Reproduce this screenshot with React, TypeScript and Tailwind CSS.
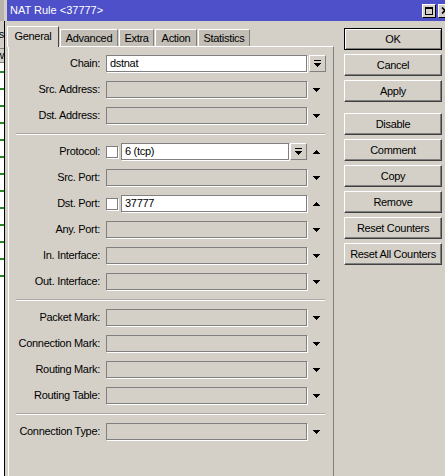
import React from "react";

type Kind = "chain" | "down" | "proto" | "port";
type Field = { label: string; kind: Kind; value?: string };

const sections: Field[][] = [
  [
    { label: "Chain:", kind: "chain", value: "dstnat" },
    { label: "Src. Address:", kind: "down" },
    { label: "Dst. Address:", kind: "down" },
  ],
  [
    { label: "Protocol:", kind: "proto", value: "6 (tcp)" },
    { label: "Src. Port:", kind: "down" },
    { label: "Dst. Port:", kind: "port", value: "37777" },
    { label: "Any. Port:", kind: "down" },
    { label: "In. Interface:", kind: "down" },
    { label: "Out. Interface:", kind: "down" },
  ],
  [
    { label: "Packet Mark:", kind: "down" },
    { label: "Connection Mark:", kind: "down" },
    { label: "Routing Mark:", kind: "down" },
    { label: "Routing Table:", kind: "down" },
  ],
  [{ label: "Connection Type:", kind: "down" }],
];

const tabs = [
  { name: "Advanced", w: "w-[58px]" },
  { name: "Extra", w: "w-[35px]" },
  { name: "Action", w: "w-[42px]" },
  { name: "Statistics", w: "w-[52px]" },
];

function Tri({ up }: { up?: boolean }) {
  return (
    <svg width="7" height="4" viewBox="0 0 7 4" shapeRendering="crispEdges" className="ml-[6px] shrink-0">
      <g fill="#000" transform={up ? "matrix(1 0 0 -1 0 4)" : undefined}>
        <rect x="0" y="0" width="7" height="1" />
        <rect x="1" y="1" width="5" height="1" />
        <rect x="2" y="2" width="3" height="1" />
        <rect x="3" y="3" width="1" height="1" />
      </g>
    </svg>
  );
}

function DropBtn({ className = "" }: { className?: string }) {
  return (
    <div
      className={`flex h-[17px] w-[17px] shrink-0 items-center justify-center border border-t-white border-l-white border-b-[#808080] border-r-[#808080] bg-[#d4d0c8] ${className}`}
    >
      <svg width="7" height="7" viewBox="0 0 7 7" shapeRendering="crispEdges">
        <g fill="#000">
          <rect x="0" y="0" width="7" height="1" />
          <rect x="0" y="3" width="7" height="1" />
          <rect x="1" y="4" width="5" height="1" />
          <rect x="2" y="5" width="3" height="1" />
          <rect x="3" y="6" width="1" height="1" />
        </g>
      </svg>
    </div>
  );
}

function Box({ value, w }: { value?: string; w: string }) {
  return (
    <div
      className={`h-[17px] ${w} shrink-0 border border-[#808080] shadow-[1px_1px_0_#ffffff] pl-[3px] leading-[15px] ${
        value !== undefined ? "bg-white" : "bg-[#d4d0c8]"
      }`}
    >
      {value}
    </div>
  );
}

function Check() {
  return <div className="h-[12px] w-[12px] shrink-0 border border-[#808080] bg-white shadow-[1px_1px_0_#ffffff]" />;
}

function Row({ f }: { f: Field }) {
  return (
    <div className="flex h-[17px] items-center">
      <div className="w-[84px] shrink-0 whitespace-nowrap text-right">{f.label}</div>
      <div className="ml-[6px] flex items-center">
        {f.kind === "chain" && (
          <>
            <Box value={f.value} w="w-[201px]" />
            <DropBtn className="ml-[2px]" />
          </>
        )}
        {f.kind === "down" && (
          <>
            <Box w="w-[201px]" />
            <Tri />
          </>
        )}
        {f.kind === "proto" && (
          <>
            <Check />
            <div className="ml-[3px]">
              <Box value={f.value} w="w-[168px]" />
            </div>
            <DropBtn className="ml-[1px]" />
            <Tri up />
          </>
        )}
        {f.kind === "port" && (
          <>
            <Check />
            <div className="ml-[3px]">
              <Box value={f.value} w="w-[186px]" />
            </div>
            <Tri up />
          </>
        )}
      </div>
    </div>
  );
}

const buttons1 = ["OK", "Cancel", "Apply"];
const buttons2 = ["Disable", "Comment", "Copy", "Remove", "Reset Counters", "Reset All Counters"];

function Btn({ label, def }: { label: string; def?: boolean }) {
  return (
    <div
      className={`flex h-[22px] w-[98px] items-center justify-center whitespace-nowrap bg-[#d4d0c8] ${
        def
          ? "border border-black shadow-[inset_1px_1px_0_#ffffff,inset_-1px_-1px_0_#808080]"
          : "border border-t-white border-l-white border-b-[#404040] border-r-[#404040] shadow-[inset_-1px_-1px_0_#808080]"
      }`}
    >
      {label}
    </div>
  );
}

export default function App() {
  return (
    <div className="flex h-[476px] w-[445px] overflow-hidden bg-[#d4d0c8] font-['Liberation_Sans',Arial,sans-serif] text-[11px] tracking-[-0.3px] text-black">
      {/* window behind, left edge */}
      <div className="flex w-[4px] shrink-0 flex-col overflow-hidden">
        <div className="h-[21px] bg-[#b8b4ac]" />
        <div className="flex h-[27px] items-center justify-end bg-[#d4d0c8]">
          <span className="whitespace-nowrap">ss</span>
        </div>
        <div className="h-px bg-[#808080]" />
        <div className="flex h-[14px] items-center justify-end border-b border-[#808080] bg-[#d4d0c8]">
          <span className="whitespace-nowrap">w</span>
        </div>
        <div className="flex flex-1 flex-col gap-[15px] bg-white pt-[8px]">
          {Array.from({ length: 13 }).map((_, i) => (
            <div key={i} className="h-[2px] bg-[#2a8a2a]" />
          ))}
        </div>
      </div>
      <div className="mt-[21px] w-px shrink-0 bg-black" />

      {/* NAT Rule window */}
      <div className="flex min-w-0 flex-1 flex-col pl-[2px]">
        <div className="flex h-[21px] shrink-0 items-center justify-between overflow-hidden bg-[#4d50c8] pl-[3px] text-white">
          <span className="whitespace-nowrap tracking-normal">NAT Rule &lt;37777&gt;</span>
          <div className="flex translate-x-[7px] items-center gap-[2px]">
            <div className="flex h-[14px] w-[14px] items-center justify-center border border-t-white border-l-white border-b-black border-r-black bg-[#d4d0c8]">
              <div className="h-[8px] w-[8px] border border-black border-t-2" />
            </div>
            <div className="flex h-[14px] w-[14px] items-center justify-center border border-t-white border-l-white border-b-black border-r-black bg-[#d4d0c8]">
              <svg width="8" height="7" viewBox="0 0 8 7">
                <path d="M1 0.5 L7 6.5 M7 0.5 L1 6.5" stroke="#000" strokeWidth="1.6" />
              </svg>
            </div>
          </div>
        </div>

        <div className="flex min-h-0 flex-1">
          {/* tabs + panel */}
          <div className="flex w-[327px] shrink-0 flex-col pt-[5px]">
            <div className="flex h-[20px] items-start">
              <div className="relative z-10 flex h-[21px] w-[52px] items-center justify-center border-l border-t border-r border-l-white border-t-white border-r-[#404040] bg-[#d4d0c8] pb-[2px]">
                General
              </div>
              {tabs.map((t) => (
                <div
                  key={t.name}
                  className={`mt-[3px] flex h-[17px] ${t.w} ml-[1px] items-center justify-center border-l border-t border-r border-l-white border-t-white border-r-[#808080] bg-[#c2beb6]`}
                >
                  {t.name}
                </div>
              ))}
            </div>
            <div className="ml-[1px] flex w-[326px] flex-1 flex-col border-l border-t border-r border-l-white border-t-white border-r-[#808080] pl-[7px] pt-[8px]">
              {sections.map((sec, i) => (
                <div key={i}>
                  {i > 0 && <div className="mb-[8px] mt-[9px] h-[2px] w-[309px] border-t border-b border-t-[#aca89f] border-b-white" />}
                  <div className="flex flex-col gap-[9px]">
                    {sec.map((f) => (
                      <Row key={f.label} f={f} />
                    ))}
                  </div>
                </div>
              ))}
            </div>
          </div>

          {/* buttons */}
          <div className="ml-[10px] flex flex-col gap-[4px] pt-[7px]">
            {buttons1.map((b) => (
              <Btn key={b} label={b} def={b === "OK"} />
            ))}
            <div className="h-[3px]" />
            {buttons2.map((b) => (
              <Btn key={b} label={b} />
            ))}
          </div>
        </div>
      </div>
    </div>
  );
}
